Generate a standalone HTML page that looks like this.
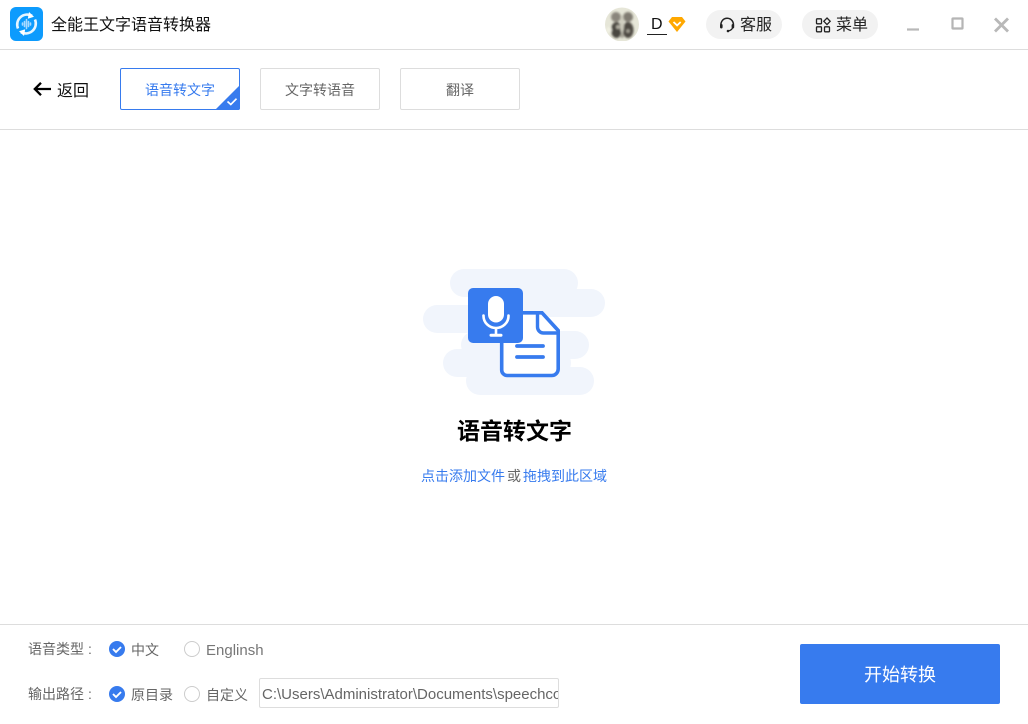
<!DOCTYPE html>
<html lang="zh">
<head>
<meta charset="utf-8">
<style>
html,body{margin:0;padding:0;background:#fff}
#p{position:relative;width:1028px;height:724px;overflow:hidden;background:#fff;font-family:"Liberation Sans","Noto Sans CJK SC",sans-serif;color:#666}
.t{position:absolute;white-space:nowrap;line-height:20px}
.l{position:absolute;background:#ddd;left:0;width:1028px;height:1px}
.tab{position:absolute;top:68px;width:118px;height:40px;border:1px solid #ddd;border-radius:2px;text-align:center;line-height:43px;font-size:14px;color:#666}
.pill{position:absolute;top:10px;height:29px;background:#f2f2f2;border-radius:15px}
svg{position:absolute;left:0;top:0}
</style>
</head>
<body>
<div id="p">
<div class="l" style="top:49px"></div>
<div class="l" style="top:129px"></div>
<div class="l" style="top:624px"></div>

<div class="pill" style="left:706px;width:76px"></div>
<div class="pill" style="left:802px;width:76px"></div>

<div class="t" style="left:51px;top:16px;font-size:16px;color:#111">全能王文字语音转换器</div>
<div class="t" style="left:651px;top:15px;font-size:16px;color:#111">D</div>
<div style="position:absolute;left:647px;top:34px;width:20px;height:1px;background:#222"></div>
<div class="t" style="left:740px;top:16px;font-size:16px;color:#222">客服</div>
<div class="t" style="left:836px;top:16px;font-size:16px;color:#222">菜单</div>
<div class="t" style="left:57px;top:82px;font-size:16px;color:#111">返回</div>

<div class="tab" style="left:120px;border-color:#377bee;color:#377bee">语音转文字</div>
<div class="tab" style="left:260px">文字转语音</div>
<div class="tab" style="left:400px">翻译</div>

<div class="t" style="left:457px;top:420px;font-size:23px;line-height:22px;font-weight:bold;color:#000">语音转文字</div>
<div class="t" style="left:421px;top:466px;font-size:14px;color:#377bee">点击添加文件</div>
<div class="t" style="left:507px;top:466px;font-size:14px;color:#666">或</div>
<div class="t" style="left:523px;top:466px;font-size:14px;color:#377bee">拖拽到此区域</div>

<div class="t" style="left:28px;top:639px;font-size:14px">语音类型</div>
<div class="t" style="left:88px;top:639px;font-size:14px">:</div>
<div class="t" style="left:131px;top:640px;font-size:14px">中文</div>
<div class="t" style="left:206px;top:641px;font-size:15px;color:#777">Englinsh</div>
<div class="t" style="left:28px;top:684px;font-size:14px">输出路径</div>
<div class="t" style="left:88px;top:684px;font-size:14px">:</div>
<div class="t" style="left:131px;top:685px;font-size:14px">原目录</div>
<div class="t" style="left:206px;top:685px;font-size:14px">自定义</div>

<div style="position:absolute;left:259px;top:678px;width:298px;height:28px;border:1px solid #ddd;border-radius:2px;overflow:hidden">
<div class="t" style="left:2px;top:6px;font-size:15px;color:#666">C:\Users\Administrator\Documents\speechconvert</div>
</div>

<div style="position:absolute;left:800px;top:644px;width:200px;height:60px;background:#377bee;border-radius:2px;color:#fff;font-size:18px;text-align:center;line-height:62px">开始转换</div>

<svg width="1028" height="724" viewBox="0 0 1028 724" fill="none">
  <defs>
    <clipPath id="av"><circle cx="622" cy="24.500" r="17"/></clipPath>
    <clipPath id="tb"><rect x="120" y="68" width="120" height="42" rx="2"/></clipPath>
    <filter id="bl" x="-20%" y="-20%" width="140%" height="140%"><feGaussianBlur stdDeviation="1"/></filter>
  </defs>

  <!-- app logo -->
  <rect x="10" y="7" width="33" height="34" rx="6" fill="#0d9bfd"/>
  <path d="M18 28.500A10 10 0 0 1 32 15.800" stroke="#e6f5ff" stroke-width="2.600"/>
  <path d="M35 19.500A10 10 0 0 1 21 32.200" stroke="#e6f5ff" stroke-width="2.600"/>
  <path d="M29 12l5 4.800-6.200 2zM24 36l-5-4.800 6.200-2z" fill="#fff"/>
  <path d="M22.500 23v2M24.500 21.500v5M26.500 19.500v9M28.500 21.500v5M30.500 23v2" stroke="#a8d9ff" stroke-width="1.600" stroke-linecap="round"/>

  <!-- avatar -->
  <g clip-path="url(#av)">
    <rect x="605" y="7" width="34" height="34" fill="#e6e6d8"/>
    <g filter="url(#bl)">
      <ellipse cx="616" cy="17" rx="5" ry="5" fill="#8a867c"/>
      <ellipse cx="628" cy="17" rx="5" ry="5" fill="#807c72"/>
      <ellipse cx="616.500" cy="30" rx="5.500" ry="8" fill="#4a463f"/>
      <ellipse cx="628" cy="30" rx="5.500" ry="8" fill="#4e4a43"/>
      <ellipse cx="622" cy="24" rx="2" ry="9" fill="#cfcdbf"/>
      <circle cx="618" cy="27" r="2" fill="#b5b2a5"/>
      <circle cx="628" cy="31" r="1.800" fill="#a8a599"/>
      <circle cx="622" cy="36" r="2" fill="#a5a295"/>
      <circle cx="609" cy="30" r="3" fill="#f0f0e2"/>
    </g>
  </g>

  <!-- diamond badge -->
  <path d="M672 17h10l3.500 4.500-8.500 10.500-8.500-10.500z" fill="#ffa800"/>
  <path d="M673.500 22l3.600 3.400 3.600-3.400" stroke="#fff" stroke-width="1.800"/>

  <!-- headset icon -->
  <path d="M721.800 27.500a6.200 6.200 0 1 1 11 -.5" stroke="#222" stroke-width="1.500"/>
  <path d="M733 26.500c-.4 2.500-2 4-5 4.500" stroke="#222" stroke-width="1.300"/>
  <rect x="720" y="24" width="2.600" height="4.500" rx="1.200" fill="#222"/>
  <rect x="731.600" y="24" width="2.600" height="4.500" rx="1.200" fill="#222"/>
  <circle cx="728" cy="31" r="1.300" fill="#222"/>

  <!-- menu icon -->
  <g stroke="#222" stroke-width="1.300">
    <rect x="816.500" y="18.800" width="5" height="5" rx=".8"/>
    <rect x="816.500" y="26.800" width="5" height="5" rx=".8"/>
    <rect x="824.500" y="26.800" width="5" height="5" rx=".8"/>
    <path d="M827 18l3.200 3.300-3.200 3.300-3.200-3.300z"/>
  </g>

  <!-- window controls -->
  <path d="M907 29.500h12" stroke="#b8b8b8" stroke-width="2.200"/>
  <rect x="952.500" y="18.500" width="10" height="10" rx=".5" stroke="#b5b5b5" stroke-width="2.200"/>
  <path d="M995 18.500l13 13M1008 18.500l-13 13" stroke="#b8b8b8" stroke-width="2.800"/>

  <!-- back arrow -->
  <path d="M51 89H35M41 82.800l-6.200 6.200 6.200 6.200" stroke="#000" stroke-width="2.300"/>

  <!-- tab corner -->
  <g clip-path="url(#tb)">
    <path d="M240 85v25h-25z" fill="#377bee"/>
  </g>
  <path d="M227.500 101.500l3.300 3 5.700-5.800" stroke="#fff" stroke-width="1.700"/>

  <!-- clouds -->
  <g fill="#f1f5fc">
    <rect x="450" y="269" width="128" height="28" rx="14"/>
    <rect x="490" y="289" width="115" height="28" rx="14"/>
    <rect x="423" y="305" width="90" height="28" rx="14"/>
    <rect x="461" y="331" width="128" height="28" rx="14"/>
    <rect x="443" y="349" width="128" height="28" rx="14"/>
    <rect x="466" y="367" width="128" height="28" rx="14"/>
  </g>

  <!-- document -->
  <path d="M507 312.800h35l16.200 17.700v38.500a6.500 6.500 0 0 1-6.500 6.500h-44.500a5.500 5.500 0 0 1-5.500-5.500v-51a6 6 0 0 1 5.300-6.700z" fill="#fff" stroke="#377bee" stroke-width="3.600"/>
  <path d="M537.500 313v14a6 6 0 0 0 6 6h14.500" fill="#fff" stroke="#377bee" stroke-width="3.400"/>
  <path d="M517 346h26M517 357h26" stroke="#377bee" stroke-width="3.800" stroke-linecap="round"/>

  <!-- mic tile -->
  <rect x="468" y="288" width="55" height="55" rx="5" fill="#377bee"/>
  <rect x="488" y="296" width="16" height="26.500" rx="8" fill="#fff"/>
  <path d="M483.500 315.500v.5a12.500 12 0 0 0 25 0v-.5" stroke="#fff" stroke-width="2.600" stroke-linecap="round"/>
  <path d="M496 328v7" stroke="#fff" stroke-width="2.600"/>
  <path d="M491 335.200h10" stroke="#fff" stroke-width="3" stroke-linecap="round"/>

  <!-- radios -->
  <circle cx="117" cy="649" r="8" fill="#377bee"/>
  <path d="M113 649l3 3 5-5" stroke="#fff" stroke-width="1.900"/>
  <circle cx="192" cy="649" r="7.500" stroke="#ccc"/>
  <circle cx="117" cy="694" r="8" fill="#377bee"/>
  <path d="M113 694l3 3 5-5" stroke="#fff" stroke-width="1.900"/>
  <circle cx="192" cy="694" r="7.500" stroke="#ccc"/>
</svg>
</div>
</body>
</html>
